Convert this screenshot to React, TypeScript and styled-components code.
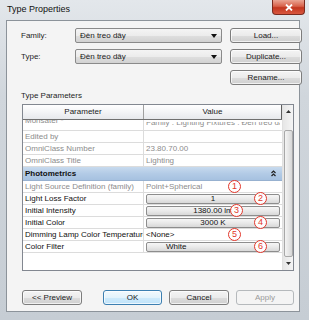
import React from "react";
import styled, { createGlobalStyle } from "styled-components";

const GlobalStyle = createGlobalStyle`
  html, body {
    margin: 0;
    padding: 0;
    width: 309px;
    height: 320px;
    overflow: hidden;
    background: #c9d0d6;
  }
  body {
    font-family: "Liberation Sans", Arial, sans-serif;
    color: #1a1a1a;
  }
  * { box-sizing: border-box; }
`;

const Window = styled.div`
  width: 309px;
  height: 320px;
  display: flex;
  flex-direction: column;
  background: linear-gradient(180deg, #e3e7eb 0%, #d0d6dc 30%, #c6cdd4 100%);
`;

const TitleBar = styled.div`
  height: 20px;
  display: flex;
  justify-content: space-between;
  align-items: flex-start;
  padding-left: 7px;
`;

const Title = styled.div`
  font-size: 9px;
  line-height: 19px;
  color: #111;
`;

const CloseButton = styled.div`
  width: 33px;
  height: 15px;
  margin-right: 4px;
  border: 1px solid #7a2a1e;
  border-top: none;
  border-radius: 0 0 4px 4px;
  background: linear-gradient(180deg, #eaa594 0%, #d8614a 45%, #c2361f 55%, #d9573f 100%);
  display: flex;
  align-items: center;
  justify-content: center;
`;

const Client = styled.div`
  flex: 1;
  margin: 0 9px 8px 6px;
  background: #f4f4f4;
  border: 1px solid #8c939a;
  padding: 7px 5px 0 14px;
  display: flex;
  flex-direction: column;
`;

const TopGrid = styled.div`
  display: grid;
  grid-template-columns: 46px 147px 72px;
  grid-auto-rows: 15px;
  column-gap: 8px;
  row-gap: 6px;
  align-items: center;
`;

const Label = styled.div`
  font-size: 8px;
  color: #1e1e1e;
`;

const Combo = styled.div`
  height: 15px;
  border: 1px solid #8a8a8a;
  border-radius: 2px;
  background: linear-gradient(180deg, #f4f4f4 0%, #ececec 50%, #dfdfdf 51%, #d2d2d2 100%);
  display: flex;
  align-items: center;
  justify-content: space-between;
  padding: 0 4px 0 4px;
  font-size: 8px;
`;

const DialogButton = styled.div<{ $primary?: boolean; $disabled?: boolean; $w?: number }>`
  height: 15px;
  width: ${({ $w }) => ($w ? `${$w}px` : "auto")};
  grid-column: 3;
  border: 1px solid ${({ $primary, $disabled }) => ($primary ? "#3c7fb1" : $disabled ? "#b5b9bc" : "#7d7d7d")};
  border-radius: 3px;
  background: ${({ $primary, $disabled }) =>
    $primary
      ? "linear-gradient(180deg, #f2f9fd 0%, #e3f3fc 50%, #cfeafb 51%, #bfe3fa 100%)"
      : $disabled
      ? "#f4f4f4"
      : "linear-gradient(180deg, #f4f4f4 0%, #ebebeb 50%, #dddddd 51%, #cfcfcf 100%)"};
  box-shadow: inset 0 0 0 1px ${({ $disabled }) => ($disabled ? "transparent" : "rgba(255,255,255,0.7)")};
  font-size: 8px;
  color: ${({ $disabled }) => ($disabled ? "#9a9a9a" : "#1a1a1a")};
  display: flex;
  align-items: center;
  justify-content: center;
`;

const SectionLabel = styled.div`
  margin-top: 6px;
  height: 10px;
  line-height: 10px;
  font-size: 8px;
  color: #1e1e1e;
`;

const Table = styled.div`
  margin: 3px 0 0 1px;
  height: 167px;
  border: 1px solid #828790;
  background: #ffffff;
  display: flex;
`;

const Main = styled.div`
  width: 259px;
  display: flex;
  flex-direction: column;
`;

const Header = styled.div`
  height: 15px;
  display: grid;
  grid-template-columns: 121px 138px;
  border-bottom: 1px solid #6f6f6f;
  background: linear-gradient(180deg, #ffffff 0%, #f3f4f6 50%, #e6e8ec 100%);
`;

const HeaderCell = styled.div<{ $last?: boolean }>`
  font-size: 8px;
  line-height: 14px;
  text-align: center;
  color: #1a1a1a;
  border-right: 1px solid ${({ $last }) => ($last ? "#5e5e5e" : "#a0a0a0")};
`;

const Body = styled.div`
  flex: 1;
  overflow: hidden;
`;

const Row = styled.div<{ $h?: number }>`
  height: ${({ $h }) => $h ?? 12}px;
  display: grid;
  grid-template-columns: 121px 138px;
  border-bottom: 1px solid #dcdcdc;
`;

const ParamCell = styled.div<{ $dim?: boolean }>`
  padding-left: 2px;
  border-right: 1px solid #dcdcdc;
  font-size: 8px;
  line-height: 11px;
  white-space: nowrap;
  overflow: hidden;
  color: ${({ $dim }) => ($dim ? "#8c8c8c" : "#111")};
`;

const ValueCell = styled.div<{ $dim?: boolean }>`
  position: relative;
  padding: 0 2px;
  display: flex;
  align-items: center;
  font-size: 8px;
  line-height: 11px;
  white-space: nowrap;
  color: ${({ $dim }) => ($dim ? "#8c8c8c" : "#111")};
`;

const Clipped = styled.span`
  display: block;
  margin-top: -5px;
  overflow: hidden;
  white-space: nowrap;
`;

const ClipBox = styled.div`
  overflow: hidden;
  width: 100%;
`;

const ValueButton = styled.div<{ $left?: boolean }>`
  flex: 1;
  height: 10px;
  border: 1px solid #8d8d8d;
  border-radius: 2px;
  background: linear-gradient(180deg, #f6f6f6 0%, #e9e9e9 50%, #d8d8d8 100%);
  font-size: 8px;
  line-height: 8px;
  text-align: ${({ $left }) => ($left ? "left" : "center")};
  padding-left: ${({ $left }) => ($left ? "19px" : "0")};
  color: #111;
`;

const Mark = styled.div<{ $x: number }>`
  position: absolute;
  left: ${({ $x }) => $x}px;
  top: -1px;
  width: 13px;
  height: 13px;
  border-radius: 50%;
  border: 1.3px solid #e2372b;
  background: rgba(255, 255, 255, 0.92);
  color: #e2372b;
  font-size: 9px;
  line-height: 11px;
  text-align: center;
  z-index: 1;
`;

const GroupRow = styled.div`
  height: 14px;
  display: flex;
  align-items: center;
  justify-content: space-between;
  padding: 0 6px 0 2px;
  background: linear-gradient(180deg, #c7daee 0%, #b3cbe6 50%, #a6c1e0 100%);
  border-bottom: 1px solid #97b1d0;
  font-size: 8px;
  font-weight: bold;
  color: #111;
`;

const Scrollbar = styled.div`
  width: 11px;
  display: flex;
  flex-direction: column;
  background: linear-gradient(90deg, #e6e6e6 0%, #f5f5f5 100%);
  border-left: 1px solid #e0e0e0;
`;

const ScrollArrow = styled.div`
  height: 13px;
  display: flex;
  align-items: center;
  justify-content: center;
`;

const Thumb = styled.div`
  flex: 1;
  margin: 12px 0 0 1px;
  border: 1px solid #a8a8a8;
  border-radius: 2px;
  background: linear-gradient(90deg, #f4f4f4 0%, #e6e6e6 50%, #d6d6d6 100%);
`;

const Footer = styled.div`
  margin: 19px 0 0 1px;
  display: flex;
  justify-content: space-between;
`;

const ButtonGroup = styled.div`
  display: flex;
  gap: 7px;
`;

const DropArrow = () => (
  <svg width="6" height="4" viewBox="0 0 6 4">
    <path d="M0 0 L6 0 L3 4 Z" fill="#111" />
  </svg>
);

const SmallTri = ({ up }: { up?: boolean }) => (
  <svg width="5" height="3" viewBox="0 0 5 3">
    <path d={up ? "M0 3 L5 3 L2.5 0 Z" : "M0 0 L5 0 L2.5 3 Z"} fill="#333" />
  </svg>
);

const Collapse = () => (
  <svg width="5" height="7" viewBox="0 0 5 7">
    <path d="M0.5 3 L2.5 1 L4.5 3 M0.5 6 L2.5 4 L4.5 6" stroke="#222" strokeWidth="1.2" fill="none" />
  </svg>
);

type Param = {
  label: string;
  value?: string;
  dim?: boolean;
  valueDim?: boolean;
  button?: "center" | "left";
  mark?: { n: number; x: number };
};

const identity: Param[] = [
  { label: "Edited by", dim: true },
  { label: "OmniClass Number", value: "23.80.70.00", dim: true, valueDim: true },
  { label: "OmniClass Title", value: "Lighting", dim: true, valueDim: true },
];

const photometrics: Param[] = [
  { label: "Light Source Definition (family)", value: "Point+Spherical", dim: true, valueDim: true, mark: { n: 1, x: 84 } },
  { label: "Light Loss Factor", value: "1", button: "center", mark: { n: 2, x: 110 } },
  { label: "Initial Intensity", value: "1380.00 lm", button: "center", mark: { n: 3, x: 86 } },
  { label: "Initial Color", value: "3000 K", button: "center", mark: { n: 4, x: 110 } },
  { label: "Dimming Lamp Color Temperature", value: "<None>", mark: { n: 5, x: 84 } },
  { label: "Color Filter", value: "White", button: "left", mark: { n: 6, x: 110 } },
];

const ParamRow = ({ p }: { p: Param }) => (
  <Row>
    <ParamCell $dim={p.dim}>{p.label}</ParamCell>
    <ValueCell $dim={p.valueDim}>
      {p.button ? <ValueButton $left={p.button === "left"}>{p.value}</ValueButton> : p.value}
      {p.mark && <Mark $x={p.mark.x}>{p.mark.n}</Mark>}
    </ValueCell>
  </Row>
);

export default function App() {
  return (
    <>
      <GlobalStyle />
      <Window>
        <TitleBar>
          <Title>Type Properties</Title>
          <CloseButton>
            <svg width="8" height="7" viewBox="0 0 8 7">
              <path d="M1 0.5 L7 6.5 M7 0.5 L1 6.5" stroke="#fff" strokeWidth="1.8" />
            </svg>
          </CloseButton>
        </TitleBar>
        <Client>
          <TopGrid>
            <Label>Family:</Label>
            <Combo>
              <span>Đèn treo dây</span>
              <DropArrow />
            </Combo>
            <DialogButton>Load...</DialogButton>
            <Label>Type:</Label>
            <Combo>
              <span>Đèn treo dây</span>
              <DropArrow />
            </Combo>
            <DialogButton>Duplicate...</DialogButton>
            <DialogButton>Rename...</DialogButton>
          </TopGrid>
          <SectionLabel>Type Parameters</SectionLabel>
          <Table>
            <Main>
              <Header>
                <HeaderCell>Parameter</HeaderCell>
                <HeaderCell $last>Value</HeaderCell>
              </Header>
              <Body>
                <Row $h={11}>
                  <ParamCell $dim>
                    <Clipped>Monsater *</Clipped>
                  </ParamCell>
                  <ValueCell $dim>
                    <ClipBox>
                      <Clipped>Family : Lighting Fixtures : Đèn treo dây</Clipped>
                    </ClipBox>
                  </ValueCell>
                </Row>
                {identity.map((p) => (
                  <ParamRow key={p.label} p={p} />
                ))}
                <GroupRow>
                  <span>Photometrics</span>
                  <Collapse />
                </GroupRow>
                {photometrics.map((p) => (
                  <ParamRow key={p.label} p={p} />
                ))}
              </Body>
            </Main>
            <Scrollbar>
              <ScrollArrow>
                <SmallTri up />
              </ScrollArrow>
              <Thumb />
              <ScrollArrow>
                <SmallTri />
              </ScrollArrow>
            </Scrollbar>
          </Table>
          <Footer>
            <DialogButton $w={60}>&lt;&lt; Preview</DialogButton>
            <ButtonGroup>
              <DialogButton $primary $w={59}>OK</DialogButton>
              <DialogButton $w={60}>Cancel</DialogButton>
              <DialogButton $disabled $w={58}>Apply</DialogButton>
            </ButtonGroup>
          </Footer>
        </Client>
      </Window>
    </>
  );
}
